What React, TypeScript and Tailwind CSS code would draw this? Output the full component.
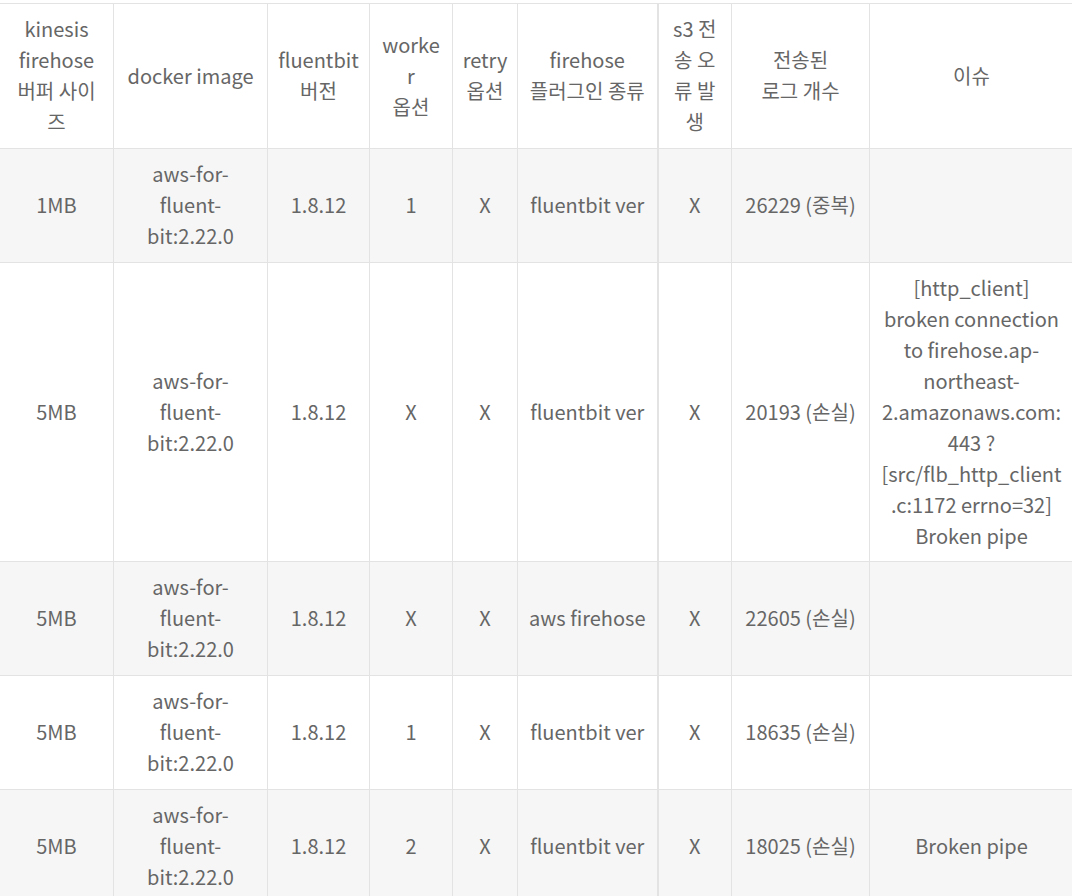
const columns = [113, 154, 102, 83, 65, 140, 74, 138, 204]

const header: string[][] = [
  ["kinesis", "firehose", "버퍼 사이", "즈"],
  ["docker image"],
  ["fluentbit", "버전"],
  ["worke", "r", "옵션"],
  ["retry", "옵션"],
  ["firehose", "플러그인 종류"],
  ["s3 전", "송 오", "류 발", "생"],
  ["전송된", "로그 개수"],
  ["이슈"],
]

const image = ["aws-for-", "fluent-", "bit:2.22.0"]

const rows: string[][][] = [
  [["1MB"], image, ["1.8.12"], ["1"], ["X"], ["fluentbit ver"], ["X"], ["26229 (중복)"], []],
  [
    ["5MB"],
    image,
    ["1.8.12"],
    ["X"],
    ["X"],
    ["fluentbit ver"],
    ["X"],
    ["20193 (손실)"],
    [
      "[http_client]",
      "broken connection",
      "to firehose.ap-",
      "northeast-",
      "2.amazonaws.com:",
      "443 ?",
      "[src/flb_http_client",
      ".c:1172 errno=32]",
      "Broken pipe",
    ],
  ],
  [["5MB"], image, ["1.8.12"], ["X"], ["X"], ["aws firehose"], ["X"], ["22605 (손실)"], []],
  [["5MB"], image, ["1.8.12"], ["1"], ["X"], ["fluentbit ver"], ["X"], ["18635 (손실)"], []],
  [["5MB"], image, ["1.8.12"], ["2"], ["X"], ["fluentbit ver"], ["X"], ["18025 (손실)"], ["Broken pipe"]],
]

function Cell({ lines, index, tight }: { lines: string[]; index: number; tight?: boolean }) {
  return (
    <td
      className={
        "border border-[#e3e3e3] px-2 pt-[9px] text-center align-middle " +
        (tight ? "pb-[10px] " : "pb-[11px] ") +
        (index === 6 ? "border-l-2" : "")
      }
    >
      {lines.map((line, i) => (
        <div key={i} className="whitespace-nowrap">
          {line}
        </div>
      ))}
    </td>
  )
}

export default function App() {
  return (
    <div className="h-[896px] w-[1072px] overflow-hidden bg-white pt-[3px]">
      <table
        className="ml-[-1px] table-fixed border-collapse text-[20px] leading-[31px] text-[#666]"
        style={{ fontFamily: '"Noto Sans CJK KR", "Noto Sans", sans-serif', width: 1074 }}
      >
        <colgroup>
          {columns.map((w, i) => (
            <col key={i} style={{ width: i === 0 ? w + 1 : w }} />
          ))}
        </colgroup>
        <thead>
          <tr className="bg-white">
            {header.map((lines, i) => (
              <Cell key={i} lines={lines} index={i} />
            ))}
          </tr>
        </thead>
        <tbody>
          {rows.map((row, r) => (
            <tr key={r} className={r % 2 === 0 ? "bg-[#f6f6f6]" : "bg-white"}>
              {row.map((lines, i) => (
                <Cell key={i} lines={lines} index={i} tight={r === 1} />
              ))}
            </tr>
          ))}
        </tbody>
      </table>
    </div>
  )
}
